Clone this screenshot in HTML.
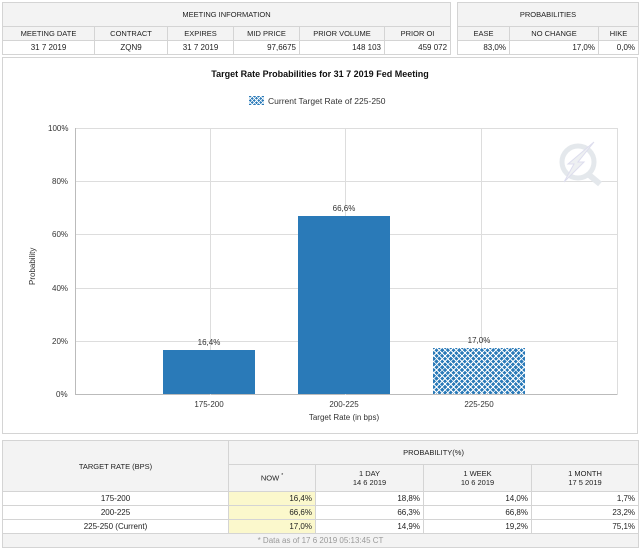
<!DOCTYPE html><html><head><style>
*{margin:0;padding:0;box-sizing:border-box}
body{width:640px;height:549px;background:#fff;font-family:"Liberation Sans",Arial,sans-serif;font-size:8px;color:#222;position:relative;overflow:hidden}
.a{position:absolute}
table{border-collapse:collapse;position:absolute;table-layout:fixed}
td{border:1px solid #d4d4d4;height:14px;padding:0 3px;font-size:8px}
.h{background:#f3f3f3;text-align:center;font-size:7.5px}
.r{text-align:right}.c{text-align:center}
.y{background:#fbf8cc;text-align:right}
.g{position:absolute;background:#ddd}
.lab{position:absolute;font-size:8px;color:#333}
</style></head><body>
<table style="left:2px;top:2px;width:448px">
<colgroup><col style="width:92px"><col style="width:73px"><col style="width:66px"><col style="width:66px"><col style="width:85px"><col style="width:66px"></colgroup>
<tr><td class="h" colspan="6" style="height:24px">MEETING INFORMATION</td></tr>
<tr><td class="h">MEETING DATE</td><td class="h">CONTRACT</td><td class="h">EXPIRES</td><td class="h">MID PRICE</td><td class="h">PRIOR VOLUME</td><td class="h">PRIOR OI</td></tr>
<tr><td class="c">31 7 2019</td><td class="c">ZQN9</td><td class="c">31 7 2019</td><td class="r">97,6675</td><td class="r">148 103</td><td class="r">459 072</td></tr>
</table>
<table style="left:457px;top:2px;width:181px">
<colgroup><col style="width:52px"><col style="width:89px"><col style="width:40px"></colgroup>
<tr><td class="h" colspan="3" style="height:24px">PROBABILITIES</td></tr>
<tr><td class="h">EASE</td><td class="h">NO CHANGE</td><td class="h">HIKE</td></tr>
<tr><td class="r">83,0%</td><td class="r">17,0%</td><td class="r">0,0%</td></tr>
</table>
<div class="a" style="left:2px;top:57px;width:636px;height:377px;border:1px solid #d4d4d4"></div>
<div class="a" style="left:0;top:69px;width:640px;text-align:center;font-weight:bold;font-size:9px;color:#111">Target Rate Probabilities for 31 7 2019 Fed Meeting</div>
<div class="a" style="left:249px;top:96px;width:15px;height:9px;background:#2a7ab8;background-image:repeating-linear-gradient(45deg,transparent 0 2px,#fff 2px 3px),repeating-linear-gradient(-45deg,transparent 0 2px,#fff 2px 3px)"></div>
<div class="a" style="left:268px;top:96px;font-size:8.5px;color:#333">Current Target Rate of 225-250</div>
<div class="g" style="left:75px;top:128px;width:543px;height:1px"></div>
<div class="g" style="left:75px;top:181px;width:543px;height:1px"></div>
<div class="g" style="left:75px;top:234px;width:543px;height:1px"></div>
<div class="g" style="left:75px;top:288px;width:543px;height:1px"></div>
<div class="g" style="left:75px;top:341px;width:543px;height:1px"></div>
<div class="g" style="left:75px;top:394px;width:543px;height:1px;background:#bbb"></div>
<div class="g" style="left:75px;top:128px;width:1px;height:267px;background:#bbb"></div>
<div class="g" style="left:210px;top:128px;width:1px;height:267px"></div>
<div class="g" style="left:345px;top:128px;width:1px;height:267px"></div>
<div class="g" style="left:481px;top:128px;width:1px;height:267px"></div>
<div class="g" style="left:617px;top:128px;width:1px;height:267px"></div>
<div class="lab" style="left:48px;top:124px">100%</div>
<div class="lab" style="left:52px;top:177px">80%</div>
<div class="lab" style="left:52px;top:230px">60%</div>
<div class="lab" style="left:52px;top:284px">40%</div>
<div class="lab" style="left:52px;top:337px">20%</div>
<div class="lab" style="left:56px;top:390px">0%</div>
<div class="lab" style="left:10px;top:256px;transform:rotate(-90deg);transform-origin:left top;top:285px;left:28px">Probability</div>
<svg class="a" style="left:552px;top:138px" width="56" height="50" viewBox="0 0 56 50"><circle cx="26" cy="24" r="16" fill="none" stroke="#e4e8ec" stroke-width="5"/><path d="M36 36 L48 46" stroke="#e4e8ec" stroke-width="6"/><path d="M42 4 L26 24 L32 24 L12 44 L22 26 L16 26 Z" fill="#eef0f2" stroke="#dde" stroke-width="1"/></svg>
<div class="a" style="left:163px;top:350px;width:92px;height:44px;background:#2a7ab8"></div>
<div class="a" style="left:298px;top:216px;width:92px;height:178px;background:#2a7ab8"></div>
<div class="a" style="left:433px;top:348px;width:92px;height:46px;background:#2a7ab8;background-image:repeating-linear-gradient(45deg,transparent 0 3px,#fff 3px 4px),repeating-linear-gradient(-45deg,transparent 0 3px,#fff 3px 4px)"></div>
<div class="lab" style="left:163px;top:338px;width:92px;text-align:center">16,4%</div>
<div class="lab" style="left:298px;top:204px;width:92px;text-align:center">66,6%</div>
<div class="lab" style="left:433px;top:336px;width:92px;text-align:center">17,0%</div>
<div class="lab" style="left:163px;top:400px;width:92px;text-align:center">175-200</div>
<div class="lab" style="left:298px;top:400px;width:92px;text-align:center">200-225</div>
<div class="lab" style="left:433px;top:400px;width:92px;text-align:center">225-250</div>
<div class="lab" style="left:298px;top:413px;width:92px;text-align:center">Target Rate (in bps)</div>
<table style="left:2px;top:440px;width:636px">
<colgroup><col style="width:226px"><col style="width:87px"><col style="width:108px"><col style="width:108px"><col style="width:107px"></colgroup>
<tr><td class="h" rowspan="2" style="background:#f3f3f3">TARGET RATE (BPS)</td><td class="h" colspan="4" style="height:24px">PROBABILITY(%)</td></tr>
<tr><td class="h" style="height:27px">NOW <sup style="font-size:5px">*</sup></td><td class="h">1 DAY<br>14 6 2019</td><td class="h">1 WEEK<br>10 6 2019</td><td class="h">1 MONTH<br>17 5 2019</td></tr>
<tr><td class="c">175-200</td><td class="y">16,4%</td><td class="r">18,8%</td><td class="r">14,0%</td><td class="r">1,7%</td></tr>
<tr><td class="c">200-225</td><td class="y">66,6%</td><td class="r">66,3%</td><td class="r">66,8%</td><td class="r">23,2%</td></tr>
<tr><td class="c">225-250 (Current)</td><td class="y">17,0%</td><td class="r">14,9%</td><td class="r">19,2%</td><td class="r">75,1%</td></tr>
<tr><td colspan="5" class="c" style="background:#f3f3f3;color:#999">* Data as of 17 6 2019 05:13:45 CT</td></tr>
</table>
</body></html>
